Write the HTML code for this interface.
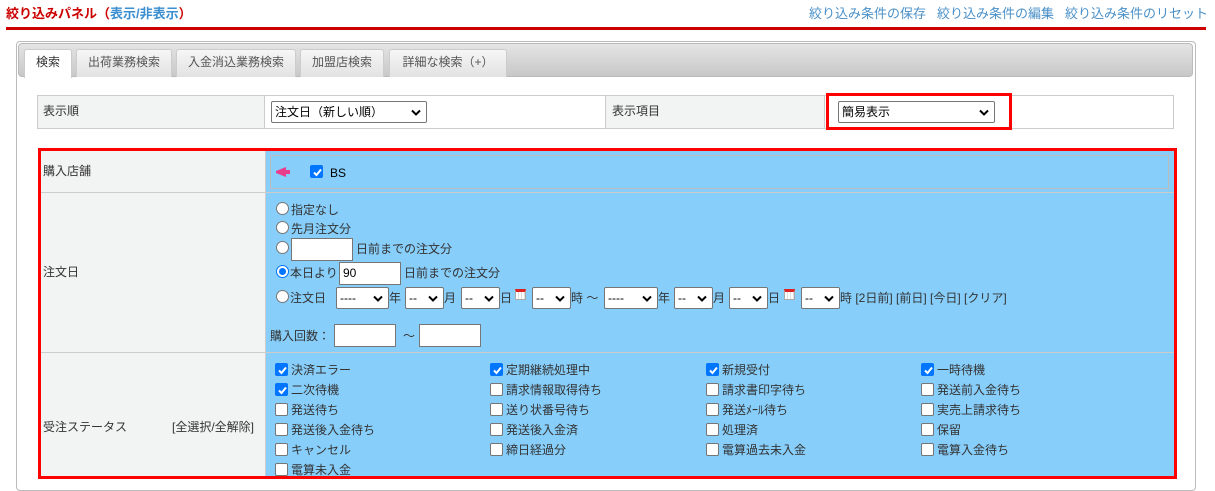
<!DOCTYPE html>
<html><head><meta charset="utf-8">
<style>
*{box-sizing:border-box;margin:0;padding:0}
body{width:1215px;height:481px;overflow:hidden;background:#fff;font-family:"Liberation Sans","Noto Sans CJK JP",sans-serif;font-size:12px;color:#333;position:relative}
.a{position:absolute;white-space:nowrap}
.t{line-height:14px}
.sel{position:absolute;background:#fff;border:1px solid #767676;border-radius:2px;height:22px;font-size:12px;line-height:20px;padding-left:3px;color:#000}
.sel svg{position:absolute;right:5px;top:7px}
.inp{position:absolute;background:#fff;border:1px solid #767676;height:23px;line-height:21px;padding-left:3px;color:#000;font-size:12px}
.cb{position:absolute;width:13px;height:13px;border-radius:2px;border:1px solid #767676;background:#fff}
.cb.on{background:#0075ff;border-color:#0075ff}
.cb.on svg{position:absolute;left:1px;top:1px}
.rd{position:absolute;width:13px;height:13px;border-radius:50%;border:1px solid #767676;background:#fff}
.rd.on{border:1px solid #0075ff}
.rd.on:after{content:"";position:absolute;left:2px;top:2px;width:7px;height:7px;border-radius:50%;background:#0075ff}
.tab{position:absolute;top:49px;height:28px;border:1px solid #ccc;border-bottom:none;border-radius:3px 3px 0 0;background:linear-gradient(#f6f6f6,#e2e2e2);color:#555;font-size:12px;text-align:center;line-height:24px}
.cal{position:absolute;width:11px;height:11px;border:1px solid #aaa;border-top:3px solid #d22;background:repeating-linear-gradient(90deg,#fff 0 2px,#ddd 2px 3px)}
.lnk{color:#4a90c8;font-size:13px}
</style></head><body>
<svg width="0" height="0" style="position:absolute"><defs>
<symbol id="chv" viewBox="0 0 10 6"><path d="M1 1 L5 5 L9 1" fill="none" stroke="#000" stroke-width="2"/></symbol>
<symbol id="chk" viewBox="0 0 11 11"><path d="M2 5.5 L4.5 8 L9 2.5" fill="none" stroke="#fff" stroke-width="2"/></symbol>
</defs></svg>

<div class="a t" style="left:6px;top:7px;color:#c00;font-weight:bold;font-size:13px">絞り込みパネル（<span style="color:#3b8fd0">表示/非表示</span>）</div>
<div class="a t lnk" style="left:809px;top:7px">絞り込み条件の保存</div>
<div class="a t lnk" style="left:937px;top:7px">絞り込み条件の編集</div>
<div class="a t lnk" style="left:1065px;top:7px">絞り込み条件のリセット</div>
<div class="a" style="left:6px;top:27px;width:1200px;height:3px;background:#c00"></div>

<div class="a" style="left:16px;top:41px;width:1180px;height:450px;border:1px solid #bbb;border-radius:4px"></div>
<div class="a" style="left:18px;top:43px;width:1175px;height:34px;border:1px solid #bbb;border-radius:4px;background:linear-gradient(#e4e4e4,#c8c8c8)"></div>
<div class="tab" style="left:24px;width:48px;background:#fff;color:#333;height:29px">検索</div>
<div class="tab" style="left:76px;width:96px">出荷業務検索</div>
<div class="tab" style="left:176px;width:120px">入金消込業務検索</div>
<div class="tab" style="left:300px;width:84px">加盟店検索</div>
<div class="tab" style="left:389px;width:118px">詳細な検索（+）</div>

<div class="a" style="left:37px;top:95px;width:1137px;height:34px;border:1px solid #ccc"></div>
<div class="a" style="left:38px;top:96px;width:227px;height:32px;background:#f2f3f3;border-right:1px solid #ccc"></div>
<div class="a" style="left:605px;top:96px;width:220px;height:32px;background:#f2f3f3;border-left:1px solid #ccc;border-right:1px solid #ccc"></div>
<div class="a t" style="left:43px;top:104px">表示順</div>
<div class="a t" style="left:612px;top:104px">表示項目</div>
<div class="sel" style="left:271px;top:101px;width:156px">注文日（新しい順）<svg width="10" height="7"><use href="#chv"/></svg></div>
<div class="a" style="left:826px;top:93px;width:186px;height:37px;border:3px solid #f00"></div>
<div class="sel" style="left:838px;top:101px;width:157px">簡易表示<svg width="10" height="7"><use href="#chv"/></svg></div>

<div class="a" style="left:41px;top:151px;width:225px;height:325px;background:#f2f3f3"></div>
<div class="a" style="left:266px;top:151px;width:908px;height:325px;background:#87cefa"></div>
<div class="a" style="left:41px;top:192px;width:1133px;height:1px;background:#ccc"></div>
<div class="a" style="left:41px;top:352px;width:1133px;height:1px;background:#ccc"></div>
<div class="a" style="left:265px;top:151px;width:1px;height:325px;background:#ccc"></div>
<div class="a" style="left:270px;top:155px;width:899px;height:34px;border:1px solid #bbb"></div>
<div class="a" style="left:38px;top:148px;width:1139px;height:331px;border:3px solid #f00"></div>

<div class="a t" style="left:43px;top:164px">購入店舗</div>
<svg class="a" style="left:276px;top:167px" width="14" height="10"><path d="M0 4 L10 0 L10 10 L0 6Z M10 3 L14 3 L14 7 L10 7Z" fill="#e83e8c"/></svg>
<div class="cb on" style="left:310px;top:165px"><svg width="11" height="11"><use href="#chk"/></svg></div>
<div class="a t" style="left:330px;top:166px;color:#000">BS</div>

<div class="a t" style="left:43px;top:265px">注文日</div>
<div class="rd" style="left:276px;top:202px"></div><div class="a t" style="left:291px;top:203px">指定なし</div>
<div class="rd" style="left:276px;top:221px"></div><div class="a t" style="left:291px;top:222px">先月注文分</div>
<div class="rd" style="left:276px;top:241px"></div><div class="inp" style="left:291px;top:238px;width:62px"></div><div class="a t" style="left:356px;top:242px">日前までの注文分</div>
<div class="rd on" style="left:276px;top:265px"></div><div class="a t" style="left:290px;top:266px">本日より</div><div class="inp" style="left:339px;top:262px;width:62px">90</div><div class="a t" style="left:404px;top:266px">日前までの注文分</div>
<div class="rd" style="left:276px;top:290px"></div><div class="a t" style="left:290px;top:291px">注文日</div>
<div class="sel" style="left:336px;top:287px;width:53px">----<svg width="10" height="7"><use href="#chv"/></svg></div><div class="a t" style="left:389px;top:291px">年</div>
<div class="sel" style="left:405px;top:287px;width:39px">--<svg width="10" height="7"><use href="#chv"/></svg></div><div class="a t" style="left:444px;top:291px">月</div>
<div class="sel" style="left:461px;top:287px;width:39px">--<svg width="10" height="7"><use href="#chv"/></svg></div><div class="a t" style="left:500px;top:291px">日</div>
<div class="cal" style="left:515px;top:289px"></div>
<div class="sel" style="left:532px;top:287px;width:39px">--<svg width="10" height="7"><use href="#chv"/></svg></div><div class="a t" style="left:571px;top:291px">時 ～</div>
<div class="sel" style="left:604px;top:287px;width:54px">----<svg width="10" height="7"><use href="#chv"/></svg></div><div class="a t" style="left:658px;top:291px">年</div>
<div class="sel" style="left:674px;top:287px;width:39px">--<svg width="10" height="7"><use href="#chv"/></svg></div><div class="a t" style="left:713px;top:291px">月</div>
<div class="sel" style="left:729px;top:287px;width:39px">--<svg width="10" height="7"><use href="#chv"/></svg></div><div class="a t" style="left:768px;top:291px">日</div>
<div class="cal" style="left:784px;top:289px"></div>
<div class="sel" style="left:801px;top:287px;width:39px">--<svg width="10" height="7"><use href="#chv"/></svg></div><div class="a t" style="left:840px;top:291px">時 [2日前] [前日] [今日] [クリア]</div>
<div class="a t" style="left:270px;top:329px">購入回数：</div>
<div class="inp" style="left:334px;top:324px;width:62px"></div><div class="a t" style="left:403px;top:329px">～</div><div class="inp" style="left:419px;top:324px;width:62px"></div>

<div class="a t" style="left:43px;top:420px">受注ステータス</div>
<div class="a t" style="left:172px;top:420px">[全選択/全解除]</div>

<div id="cbs"></div>
<script>
var cols=[275,490,706,921],rows=[363,383,403,423,443,463];
var items=[[["決済エラー",1],["定期継続処理中",1],["新規受付",1],["一時待機",1]],
[["二次待機",1],["請求情報取得待ち"],["請求書印字待ち"],["発送前入金待ち"]],
[["発送待ち"],["送り状番号待ち"],["発送ﾒｰﾙ待ち"],["実売上請求待ち"]],
[["発送後入金待ち"],["発送後入金済"],["処理済"],["保留"]],
[["キャンセル"],["締日経過分"],["電算過去未入金"],["電算入金待ち"]],
[["電算未入金"]]];
var h="";
items.forEach(function(r,i){r.forEach(function(it,j){
h+='<div class="cb'+(it[1]?' on':'')+'" style="left:'+cols[j]+'px;top:'+rows[i]+'px">'+(it[1]?'<svg width="11" height="11"><use href="#chk"/></svg>':'')+'</div>';
h+='<div class="a t" style="left:'+(cols[j]+16)+'px;top:'+(rows[i])+'px">'+it[0]+'</div>';});});
document.getElementById("cbs").innerHTML=h;
</script>
</body></html>
